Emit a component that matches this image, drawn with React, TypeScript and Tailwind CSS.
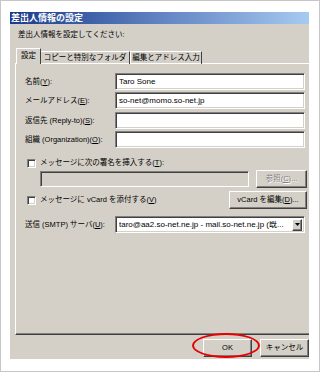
const raised =
  "border border-t-white border-l-white border-r-[#404040] border-b-[#404040] shadow-[inset_-1px_-1px_0_#808080]";
const sunken =
  "border border-t-[#808080] border-l-[#808080] border-r-white border-b-white shadow-[inset_1px_1px_0_#404040,inset_-1px_-1px_0_#d4d0c8]";

function TextBox({ value }: { value?: string }) {
  return (
    <div className={`w-[190px] h-[17px] bg-white ${sunken} flex items-center pl-[3px] text-[8px] overflow-hidden whitespace-nowrap`}>
      {value}
    </div>
  );
}

function Check() {
  return <div className={`w-[9px] h-[9px] bg-white ${sunken} shrink-0`} />;
}

function FieldRow({ label, value, className = "" }: { label: React.ReactNode; value?: string; className?: string }) {
  return (
    <div className={`flex items-center h-[17px] ${className}`}>
      <span className="w-[90px] whitespace-nowrap">{label}</span>
      <TextBox value={value} />
    </div>
  );
}

export default function App() {
  return (
    <div className="w-[320px] h-[372px] bg-white border border-[#c6c6c6] pl-[9px] pt-[11px] font-['Liberation_Sans','Noto_Sans_CJK_JP',sans-serif] text-[7.5px] text-black leading-none">
      <div className="w-[299px] h-[347px] bg-[#d4d0c8] flex flex-col">
        <div className="h-[12px] bg-linear-to-r from-[#1a3a8a] via-[#6283c2] to-[#a6caf0] text-white font-bold text-[9px] leading-[12px] pl-[1px]">
          差出人情報の設定
        </div>
        <div className="h-[24px] pl-[8px] pb-[2px] flex items-center">差出人情報を設定してください:</div>

        <div className="flex items-end h-[16px] -mb-px pl-[6px] relative z-10">
          <div className="w-[25px] h-[16px] bg-[#d4d0c8] border-t border-l border-r border-t-white border-l-white border-r-[#404040] flex items-center justify-center pb-[1px]">
            設定
          </div>
          <div className="w-[89px] h-[13px] border-t border-r border-t-white border-r-[#404040] flex items-center justify-center">
            コピーと特別なフォルダ
          </div>
          <div className="w-[72px] h-[13px] border-t border-l border-r border-t-white border-l-white border-r-[#404040] flex items-center justify-center">
            編集とアドレス入力
          </div>
        </div>

        <div className="ml-[5px] h-[272px] border-t border-l border-b border-t-white border-l-white border-b-[#404040] shadow-[inset_0_-1px_0_#808080] pt-[9px] pl-[9px] flex flex-col">
          <FieldRow label={<>名前(<u>Y</u>):</>} value="Taro Sone" />
          <FieldRow className="mt-[2px]" label={<>メールアドレス(<u>E</u>):</>} value="so-net@momo.so-net.jp" />
          <FieldRow className="mt-[3px]" label={<>返信先 (Reply-to)(<u>S</u>):</>} />
          <FieldRow className="mt-[2px]" label={<>組織 (Organization)(<u>O</u>):</>} />

          <div className="flex items-center h-[14px] mt-[8px] pl-[2px] gap-[4px]">
            <Check />
            <span>メッセージに次の署名を挿入する(<u>T</u>):</span>
          </div>
          <div className="flex items-center h-[18px] pl-[15px]">
            <div className={`w-[209px] h-[16px] bg-[#d4d0c8] ${sunken}`} />
            <div className={`ml-[7px] w-[51px] h-[18px] ${raised} flex items-center justify-center text-[#808080] [text-shadow:1px_1px_0_#fff]`}>
              参照(<u>C</u>)...
            </div>
          </div>
          <div className="flex items-center h-[18px] mt-[3px] pl-[2px]">
            <Check />
            <span className="ml-[4px]">メッセージに vCard を添付する(<u>V</u>)</span>
            <div className={`ml-auto mr-[2px] w-[78px] h-[18px] ${raised} flex items-center justify-center`}>
              vCard を編集(<u>D</u>)...
            </div>
          </div>
          <div className="flex items-center h-[17px] mt-[7px]">
            <span className="w-[90px] whitespace-nowrap">送信 (SMTP) サーバ(<u>U</u>):</span>
            <div className={`w-[190px] h-[17px] bg-white ${sunken} flex items-center pl-[3px] pr-[2px] text-[8px]`}>
              <span className="flex-1 overflow-hidden whitespace-nowrap">taro@aa2.so-net.ne.jp - mail.so-net.ne.jp (既...</span>
              <div className={`w-[10px] h-[12px] bg-[#d4d0c8] ${raised} flex items-center justify-center`}>
                <svg width="5" height="3" viewBox="0 0 5 3">
                  <path d="M0 0h5L2.5 3z" fill="#000" />
                </svg>
              </div>
            </div>
          </div>
        </div>

        <div className="flex justify-end gap-[8px] mt-[4px]">
          <div className="relative">
            <div className={`w-[49px] h-[18px] ${raised} flex items-center justify-center`}>OK</div>
            <div className="absolute -left-[11px] -top-[6px] w-[68px] h-[25px] rounded-[50%] border-2 border-[#e60000]" />
          </div>
          <div className={`w-[49px] h-[18px] ${raised} flex items-center justify-center`}>キャンセル</div>
        </div>
      </div>
    </div>
  );
}
